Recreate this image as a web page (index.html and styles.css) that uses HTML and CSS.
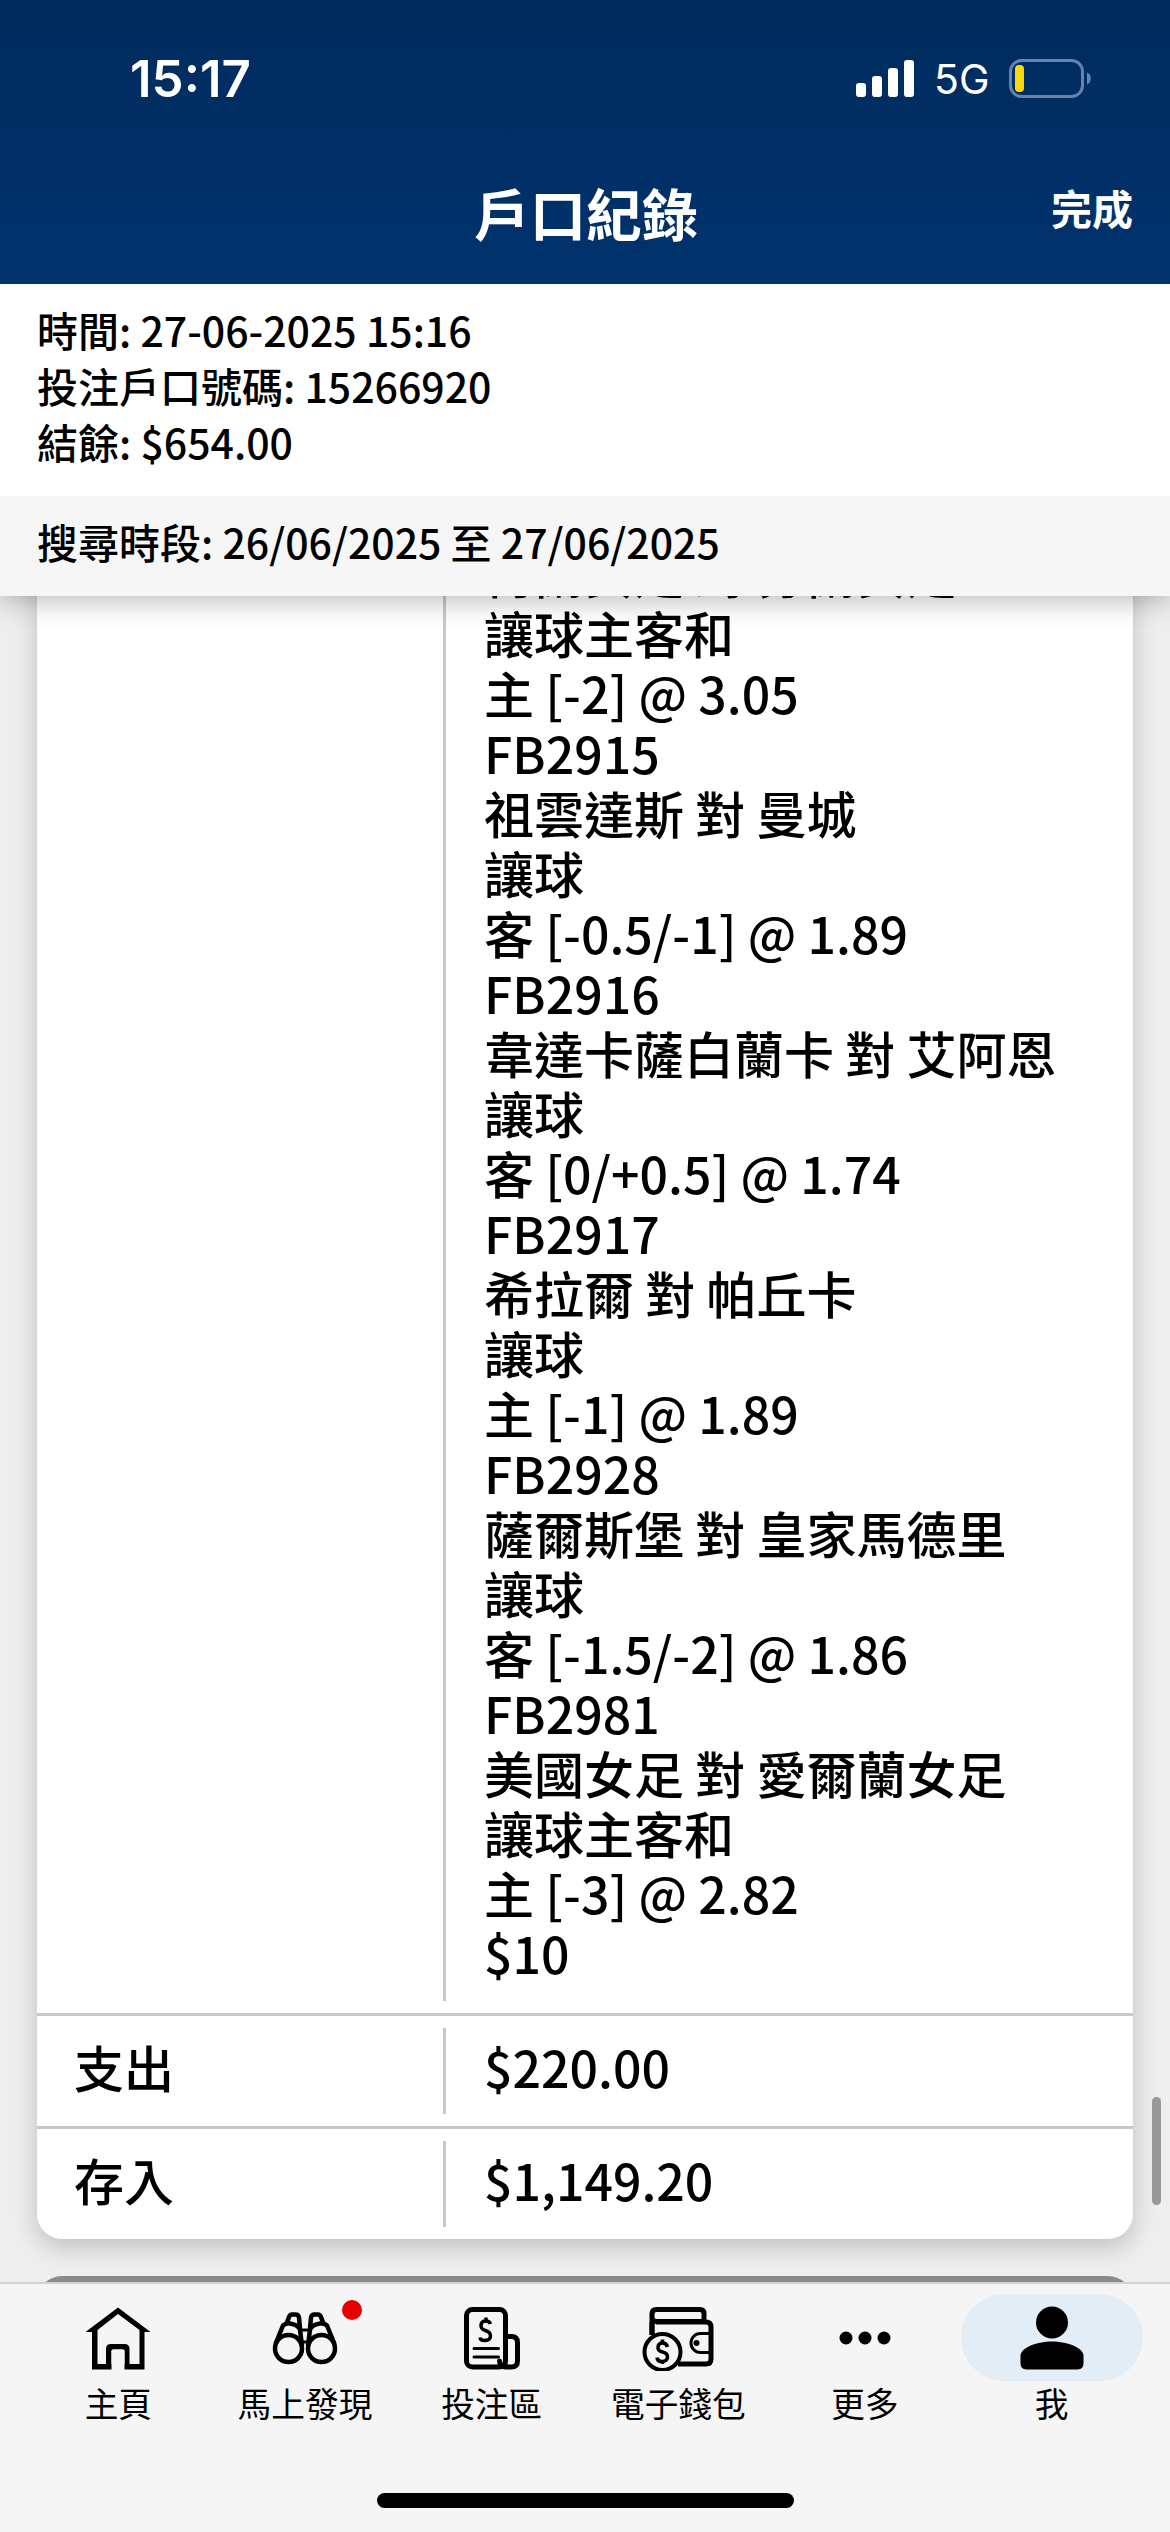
FILE: index.html
```html
<!DOCTYPE html>
<html lang="zh-Hant">

<head>
    <meta charset="UTF-8">
    <meta name="viewport" content="width=device-width, initial-scale=1.0">
    <title>戶口紀錄</title>
    <link rel="stylesheet" href="styles.css">
</head>

<body>
    <div class="app">
        <header class="header">
            <div class="status-bar">
                <span class="clock">15:17</span>
                <div class="status-right">
                    <svg class="signal" width="58" height="37" viewBox="0 0 58 37" fill="#fff">
                        <rect x="0" y="23" width="10" height="14" rx="3" />
                        <rect x="16" y="16" width="10" height="21" rx="3" />
                        <rect x="32" y="8" width="10" height="29" rx="3" />
                        <rect x="48" y="0" width="10" height="37" rx="3" />
                    </svg>
                    <span class="network">5G</span>
                    <svg class="battery" width="83" height="39" viewBox="0 0 83 39">
                        <rect x="1.5" y="1.5" width="72" height="36" rx="11" fill="none" stroke="#6883a9" stroke-width="3" />
                        <rect x="6" y="6" width="9" height="27" rx="4" fill="#ffd60a" />
                        <path d="M78 13.500c5 1.500 5 10.500 0 12z" fill="#6883a9" />
                    </svg>
                </div>
            </div>
            <div class="title-bar">
                <h1 class="title">戶口紀錄</h1>
                <button class="done">完成</button>
            </div>
        </header>

        <section class="info">
            <p>時間: 27-06-2025 15:16</p>
            <p>投注戶口號碼: 15266920</p>
            <p>結餘: $654.00</p>
        </section>
        <section class="period">搜尋時段: 26/06/2025 至 27/06/2025</section>

        <main class="records">
            <div class="card">
                <div class="row row-detail">
                    <div class="label"></div>
                    <div class="value">
                        荷蘭女足 對 芬蘭女足<br>
                        讓球主客和<br>
                        主 [-2] @ 3.05<br>
                        FB2915<br>
                        祖雲達斯 對 曼城<br>
                        讓球<br>
                        客 [-0.5/-1] @ 1.89<br>
                        FB2916<br>
                        韋達卡薩白蘭卡 對 艾阿恩<br>
                        讓球<br>
                        客 [0/+0.5] @ 1.74<br>
                        FB2917<br>
                        希拉爾 對 帕丘卡<br>
                        讓球<br>
                        主 [-1] @ 1.89<br>
                        FB2928<br>
                        薩爾斯堡 對 皇家馬德里<br>
                        讓球<br>
                        客 [-1.5/-2] @ 1.86<br>
                        FB2981<br>
                        美國女足 對 愛爾蘭女足<br>
                        讓球主客和<br>
                        主 [-3] @ 2.82<br>
                        $10
                    </div>
                </div>
                <div class="row">
                    <div class="label">支出</div>
                    <div class="value">$220.00</div>
                </div>
                <div class="row">
                    <div class="label">存入</div>
                    <div class="value">$1,149.20</div>
                </div>
            </div>
            <div class="next-card"></div>
            <div class="scrollbar"></div>
        </main>

        <nav class="tabs">
            <a class="tab">
                <span class="tab-icon">
                    <svg width="66" height="66" viewBox="0 0 66 66">
                        <path d="M33 2.500L65.500 27H59.500V64.500H39.500V46q0-1.500-1.500-1.500H28q-1.500 0-1.500 1.500V64.500H7V27H.500z" />
                        <path d="M33 9L54.500 25V59H44.500V44q0-5-5-5H26Q21 39 21 44V59H12.500V25z" fill="#f5f5f5" />
                        <path d="M26.500 59V46q0-1.500 1.500-1.500h10q1.500 0 1.500 1.500v13z" fill="#f5f5f5" />
                    </svg>
                </span>
                <span>主頁</span>
            </a>
            <a class="tab">
                <span class="tab-icon">
                    <svg width="66" height="66" viewBox="0 0 66 66" fill="none" stroke="#000" stroke-width="4.500" stroke-linejoin="round">
                        <circle cx="16.500" cy="43.500" r="13.500" />
                        <circle cx="49.500" cy="43.500" r="13.500" />
                        <path d="M3.500 39L11 20.500Q15 17 20 19Q26 20 28 24.500L30 41M62.500 39L55 20.500Q51 17 46 19Q40 20 38 24.500L36 41" />
                        <path d="M14 20l3-8q1-2.500 3-2.500h3.500q3 0 3.500 3l1 11M52 20l-3-8q-1-2.500-3-2.500h-3.500q-3 0-3.500 3l-1 11" />
                        <path d="M29 25h8M29 37h8" stroke-width="3" />
                    </svg>
                    <span class="badge"></span>
                </span>
                <span>馬上發現</span>
            </a>
            <a class="tab">
                <span class="tab-icon">
                    <svg width="66" height="66" viewBox="0 0 66 66" fill="none" stroke="#000" stroke-width="5" stroke-linecap="round">
                        <rect x="7.500" y="4.500" width="39" height="57.500" rx="6" />
                        <path d="M46.500 31.500h6q6 0 6 6V56q0 6-6 6h-6q-5.500 0-6-6" />
                        <path d="M47 57q0 4 3 4" stroke-width="2" />
                        <path d="M15 43.500H39.500M15 52H39.500" stroke-width="3" />
                        <path d="M31.500 19q-1-3-5-3t-4.500 4 4.500 5.500 5 5.500-5 4.500-5.500-3M27 12.500V16M27 33.500V37" stroke-width="3.500" stroke-linecap="butt" />
                    </svg>
                </span>
                <span>投注區</span>
            </a>
            <a class="tab">
                <span class="tab-icon">
                    <svg width="72" height="66" viewBox="0 0 72 66" fill="none" stroke="#000" stroke-width="5">
                        <path d="M10 30V9q0-4.500 4.500-4.500H58q4 0 4 4V16.500H14.500Q10 16.500 10 12" />
                        <path d="M10 17V30M14 17H64q5 0 5 5V54q0 5-5 5H36" />
                        <path d="M69 28.500H58.500a9.500 9.500 0 0 0 0 19H69" stroke-width="3" />
                        <circle cx="54.500" cy="38" r="3" fill="#000" stroke="none" />
                        <circle cx="20.500" cy="47" r="18" fill="#f5f5f5" stroke-width="4" />
                        <path d="M25.500 42q-1-4-5-4t-4.500 4 4.500 5 5 5-5 4.500-5.500-4M20.500 34.500V38M20.500 55.500V59" stroke-width="3.500" />
                    </svg>
                </span>
                <span>電子錢包</span>
            </a>
            <a class="tab">
                <span class="tab-icon">
                    <svg width="52" height="14" viewBox="0 0 52 14">
                        <circle cx="7" cy="7" r="6.500" />
                        <circle cx="26" cy="7" r="6.500" />
                        <circle cx="45" cy="7" r="6.500" />
                    </svg>
                </span>
                <span>更多</span>
            </a>
            <a class="tab active">
                <span class="tab-icon">
                    <svg width="64" height="64" viewBox="0 0 64 64">
                        <circle cx="32" cy="16.500" r="16" />
                        <path d="M.500 50C.500 42 16 35.500 32 35.500S63.500 42 63.500 50V57q0 6.500-6 6.500H6.500q-6 0-6-6.500z" />
                    </svg>
                </span>
                <span>我</span>
            </a>
        </nav>
        <div class="home-indicator"></div>
    </div>
</body>

</html>
```
FILE: styles.css
```css
* {
    box-sizing: border-box;
    margin: 0;
    padding: 0;
}

body {
    font-family: "Noto Sans CJK TC", "Noto Sans", sans-serif;
    font-weight: 500;
    color: #000;
    background-color: #f5f5f5;
}

.app {
    display: flex;
    flex-direction: column;
    width: 1170px;
    height: 2532px;
    overflow: hidden;
}

.header {
    height: 284px;
    flex: none;
    color: #fff;
    background: linear-gradient(#002c5e, #00326d);
}

.status-bar {
    display: flex;
    justify-content: space-between;
    align-items: center;
    height: 156px;
    padding: 0 78px 0 130px;
    font-family: Inter, sans-serif;
}

.clock {
    font-size: 51px;
    font-weight: 600;
}

.status-right {
    display: flex;
    align-items: center;
}

.network {
    width: 54px;
    margin: 2px 21px 0 20px;
    font-size: 41px;
    line-height: 44px;
    font-weight: 400;
}

.title-bar {
    display: grid;
    grid-template-columns: 1fr auto 1fr;
    align-items: center;
    height: 111px;
    padding: 0 37px 0 39px;
}

.title {
    grid-column: 2;
    font-size: 56px;
    line-height: 80px;
    font-weight: 700;
}

.done {
    justify-self: end;
    padding-bottom: 9px;
    border: none;
    background: none;
    color: #fff;
    font: inherit;
    font-size: 41px;
    line-height: 60px;
    font-weight: 700;
}

.info {
    flex: none;
    height: 212px;
    padding: 17px 37px 0;
    background-color: #fff;
    font-size: 41px;
    line-height: 56px;
}

.period {
    position: relative;
    z-index: 1;
    flex: none;
    height: 100px;
    padding: 0 37px;
    background-color: #f6f6f6;
    font-size: 41px;
    line-height: 90px;
    box-shadow: 0 6px 24px rgba(0, 0, 0, 0.25);
    /* keep the shadow off the info block above */
    clip-path: inset(0 0 -40px 0);
}

.records {
    position: relative;
    display: flex;
    flex-direction: column;
    justify-content: flex-end;
    flex: none;
    height: 1686px;
    padding: 0 37px;
    overflow: hidden;
    background-color: #eee;
}

.card {
    flex: none;
    background-color: #fff;
    border-radius: 25px;
    box-shadow: 0 8px 24px rgba(0, 0, 0, 0.2);
}

.row {
    display: flex;
    padding: 12px 0;
    font-size: 50px;
    line-height: 60px;
}

.row + .row {
    border-top: 3px solid #c8c8c8;
}

.label {
    width: 409px;
    padding: 8px 37px 18px;
    border-right: 3px solid #c8c8c8;
}

.value {
    flex: 1;
    padding: 8px 38px 18px;
}

.row-detail .value {
    padding-bottom: 19px;
}

.next-card {
    flex: none;
    height: 120px;
    margin: 37px 0 -114px;
    border-radius: 25px;
    background-color: #8a8a8a;
}

.scrollbar {
    position: absolute;
    right: 9px;
    top: 1501px;
    width: 9px;
    height: 108px;
    border-radius: 5px;
    background-color: #999;
}

.tabs {
    position: relative;
    z-index: 1;
    display: grid;
    grid-template-columns: repeat(6, 1fr);
    flex: none;
    height: 211px;
    padding: 10px 25px 0;
    border-top: 2px solid #d2d2d2;
    background-color: #f5f5f5;
}

.tab {
    display: flex;
    flex-direction: column;
    align-items: center;
    font-size: 33.7px;
    line-height: 44px;
    font-weight: 400;
}

.tab-icon {
    position: relative;
    display: flex;
    justify-content: center;
    align-items: center;
    width: 182px;
    height: 87px;
    border-radius: 44px;
}

.active .tab-icon {
    background-color: #e2edf5;
}

.badge {
    position: absolute;
    top: 6px;
    right: 34px;
    width: 20px;
    height: 20px;
    border-radius: 50%;
    background-color: #e60000;
}

.home-indicator {
    align-self: center;
    flex: none;
    width: 417px;
    height: 15px;
    border-radius: 8px;
    background-color: #000;
}
```
